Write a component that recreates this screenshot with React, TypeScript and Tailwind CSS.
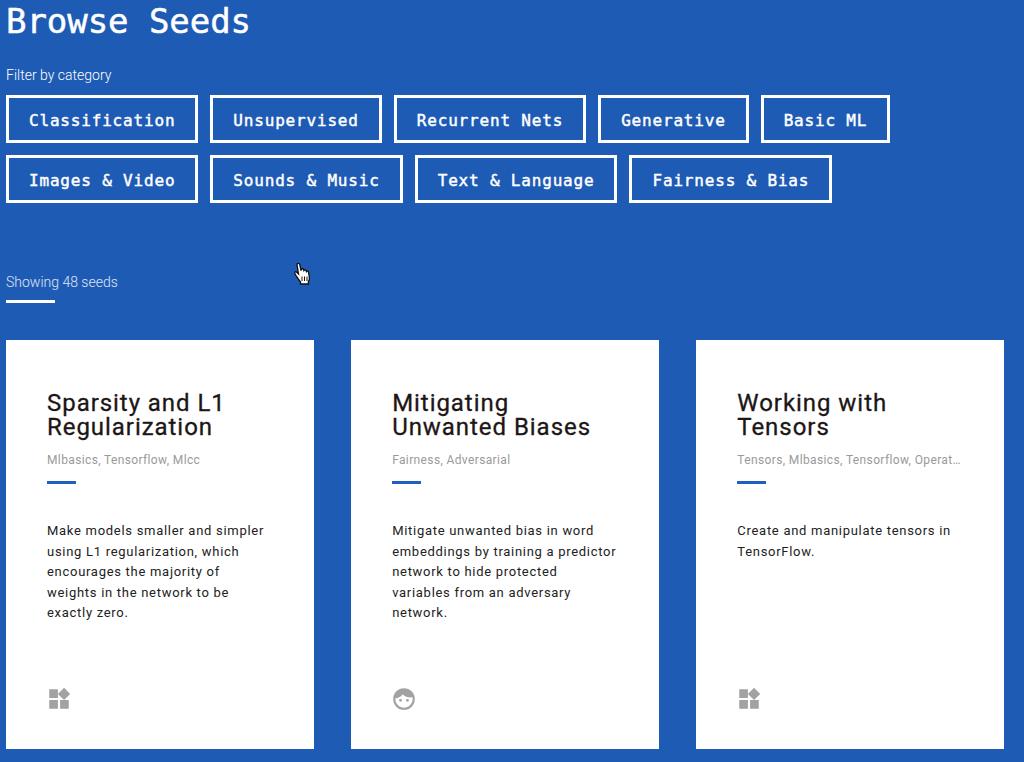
const filtersA = ["Classification", "Unsupervised", "Recurrent Nets", "Generative", "Basic ML"];
const filtersB = ["Images & Video", "Sounds & Music", "Text & Language", "Fairness & Bias"];

function Widgets() {
  return (
    <svg width="26" height="26" viewBox="0 0 24 24" fill="#a2a2a2">
      <path d="M13 13v8h8v-8h-8zM3 21h8v-8H3v8zM3 3v8h8V3H3zm13.66-1.31L11 7.34 16.66 13l5.66-5.66-5.66-5.65z" />
    </svg>
  );
}

function Face() {
  return (
    <svg width="26" height="26" viewBox="0 0 24 24" fill="#a2a2a2">
      <path fillRule="evenodd" d="M12 2a10 10 0 1 0 0 20 10 10 0 0 0 0-20zM4.200 11.200C5 11.200 8.500 11 10.800 7.600c1.600 2 4.400 3.300 9 2.800.1.500.2 1 .2 1.600 0 4.400-3.600 8-8 8s-8-3.600-8-8c0-.3 0-.5.200-.8z" />
      <circle cx="8.800" cy="13.200" r="1.300" />
      <circle cx="15.200" cy="13.200" r="1.300" />
    </svg>
  );
}

function Cursor() {
  return (
    <svg className="absolute left-[293px] top-[262px]" width="20" height="24" viewBox="0 0 20 24">
      <path
        d="M4 2.500c0-1.500 2.500-1.500 2.800 0L8 8.500l.3-1c.5-1 2-1 2.300 0l.3 1c.5-.9 2-.8 2.300.2l.2.800c.6-.7 1.900-.4 2.100.6l.9 5.400c.2 1.500-.2 3-1 4.200V22H7.500v-2L3.500 14.500 1.800 11.300c-.5-1 .8-2 1.700-1.200L5.500 12 4 2.500z"
        fill="#fff"
        stroke="#111"
        strokeWidth="1.300"
      />
      <path d="M9 14.500V19M11.500 14.500V19M14 14.500V19" stroke="#111" strokeWidth="1" />
    </svg>
  );
}

const cards = [
  {
    title: ["Sparsity and L1", "Regularization"],
    tags: "Mlbasics, Tensorflow, Mlcc",
    body: ["Make models smaller and simpler", "using L1 regularization, which", "encourages the majority of", "weights in the network to be", "exactly zero."],
    icon: <Widgets />,
  },
  {
    title: ["Mitigating", "Unwanted Biases"],
    tags: "Fairness, Adversarial",
    body: ["Mitigate unwanted bias in word", "embeddings by training a predictor", "network to hide protected", "variables from an adversary", "network."],
    icon: <Face />,
  },
  {
    title: ["Working with", "Tensors"],
    tags: "Tensors, Mlbasics, Tensorflow, Operat…",
    body: ["Create and manipulate tensors in", "TensorFlow."],
    icon: <Widgets />,
  },
];

function Chip({ label }: { label: string }) {
  return (
    <button className="h-12 border-[3px] border-white px-[20px] pt-[4px] text-[16px] font-normal tracking-[0.82px] text-white whitespace-pre [-webkit-text-stroke:0.45px_white]">
      {label}
    </button>
  );
}

export default function App() {
  return (
    <div className="relative flow-root h-[762px] w-[1024px] overflow-hidden bg-[#1e5bb5] pl-[6px] pr-[20px] font-['Roboto',sans-serif]">
      <h1 className="mt-[2px] h-[38px] text-[34px] leading-[38px] text-white font-['DejaVu_Sans_Mono',monospace] tracking-[-0.05px] [-webkit-text-stroke:0.5px_white]">
        Browse Seeds
      </h1>
      <p className="mt-[27px] text-[14px] leading-[17px] font-light text-white">Filter by category</p>
      <div className="mt-[11px] flex flex-col gap-[12px] font-['DejaVu_Sans_Mono',monospace]">
        <div className="flex gap-[12px]">
          {filtersA.map((f) => (
            <Chip key={f} label={f} />
          ))}
        </div>
        <div className="flex gap-[12px]">
          {filtersB.map((f) => (
            <Chip key={f} label={f} />
          ))}
        </div>
      </div>
      <p className="mt-[71px] text-[14px] leading-[17px] font-light text-white/85">Showing 48 seeds</p>
      <div className="mt-[9px] h-[3px] w-[49px] bg-white" />
      <div className="mt-[37px] grid grid-cols-3 gap-[37.5px]">
        {cards.map((c) => (
          <div key={c.tags} className="flex h-[409px] flex-col bg-white pl-[41px] pt-[51px]">
            <h2 className="text-[24px] leading-[24px] font-normal tracking-[0.95px] text-[#1d1616] [-webkit-text-stroke:0.3px_#1d1616]">
              {c.title.map((t) => (
                <div key={t}>{t}</div>
              ))}
            </h2>
            <p className="mt-[14px] text-[12px] leading-[14px] tracking-[0.37px] text-[#9a9a9a]">{c.tags}</p>
            <div className="mt-[14px] h-[3px] w-[29px] bg-[#1e5fbf]" />
            <div className="mt-[37px] text-[13px] leading-[20.5px] tracking-[0.71px] text-[#222]">
              {c.body.map((t) => (
                <div key={t}>{t}</div>
              ))}
            </div>
            <div className="mt-auto mb-[37px] -ml-[1px]">{c.icon}</div>
          </div>
        ))}
      </div>
      <Cursor />
    </div>
  );
}
